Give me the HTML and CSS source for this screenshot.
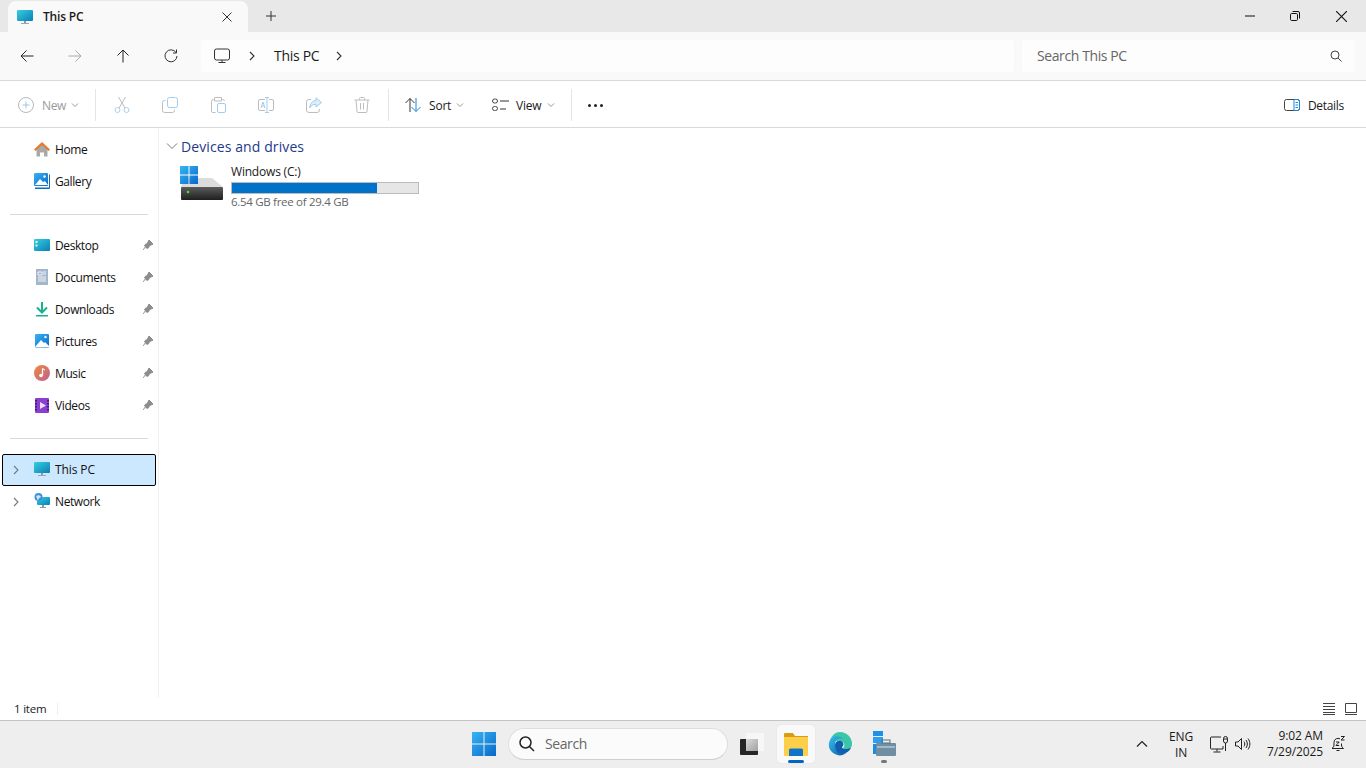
FILE: index.html
```html
<!DOCTYPE html>
<html>

<head>
    <meta charset="utf-8">
    <title>This PC</title>
    <link rel="stylesheet" href="styles.css">
</head>

<body>
    <!-- 공용 아이콘 -->
    <svg class="defs" width="0" height="0">
        <defs>
            <linearGradient id="gScreen" x1="0" y1="0" x2="1" y2="1">
                <stop offset="0" stop-color="#35cfe0"/>
                <stop offset="1" stop-color="#0a7fb5"/>
            </linearGradient>
            <linearGradient id="gBlue" x1="0" y1="0" x2="1" y2="1">
                <stop offset="0" stop-color="#36b5f5"/>
                <stop offset="1" stop-color="#0868c8"/>
            </linearGradient>
            <linearGradient id="gMusic" x1="0" y1="0" x2="1" y2="1">
                <stop offset="0" stop-color="#ee8a3c"/>
                <stop offset="1" stop-color="#c0608f"/>
            </linearGradient>
            <linearGradient id="gDrive" x1="0" y1="0" x2="0" y2="1">
                <stop offset="0" stop-color="#5c5c5c"/>
                <stop offset="1" stop-color="#1e1e1e"/>
            </linearGradient>
            <linearGradient id="gEdge" x1="0" y1="0" x2="1" y2="1">
                <stop offset="0" stop-color="#35c1f1"/>
                <stop offset="1" stop-color="#0c59a4"/>
            </linearGradient>
            <linearGradient id="gTask" x1="0" y1="0" x2="1" y2="1">
                <stop offset="0" stop-color="#dadada"/>
                <stop offset="1" stop-color="#a0a0a0"/>
            </linearGradient>
            <symbol id="monitor" viewBox="0 0 16 16">
                <rect x="0" y="1" width="16" height="11" rx="1" fill="url(#gScreen)"/>
                <rect x="7" y="12" width="2" height="2" fill="#8a9aa5"/>
                <rect x="4" y="14" width="8" height="1" fill="#9aa7b0"/>
            </symbol>
            <symbol id="pin" viewBox="0 0 12 12">
                <path d="M7 1l4 4-1 .6-2.300.8-1.200 2.400L5 9.400 2.600 7 3.200 5.500l2.400-1.200.8-2.300z M3.600 7.600L1.200 10.800" fill="#8c8c8c" stroke="#8c8c8c"/>
            </symbol>
            <symbol id="chev-right" viewBox="0 0 10 10">
                <path d="M3 1l4 4-4 4" fill="none" stroke="currentColor" stroke-width="1.100"/>
            </symbol>
            <symbol id="chev-down" viewBox="0 0 10 10">
                <path d="M2 3.500L5 6.500 8 3.500" fill="none" stroke="currentColor"/>
            </symbol>
        </defs>
    </svg>

    <div class="window">
        <!-- 타이틀바 -->
        <div class="titlebar">
            <div class="tab">
                <svg class="ico16" width="16" height="16"><use href="#monitor"/></svg>
                <span class="tab-name">This PC</span>
                <svg class="tab-close" width="10" height="10" viewBox="0 0 10 10"><path d="M.5.5l9 9M9.500.5l-9 9" stroke="#333" fill="none"/></svg>
            </div>
            <svg class="tab-add" width="10" height="10" viewBox="0 0 10 10"><path d="M5 0v10M0 5h10" stroke="#333" fill="none"/></svg>
            <div class="win-btns">
                <svg width="10" height="10" viewBox="0 0 10 10"><path d="M0 5h10" stroke="#111" fill="none"/></svg>
                <svg width="10" height="10" viewBox="0 0 10 10"><rect x=".5" y="2.500" width="7" height="7" rx="1.200" stroke="#111" fill="none"/><path d="M2.500.5h5.500a1.500 1.500 0 0 1 1.500 1.500v5.500" stroke="#111" fill="none"/></svg>
                <svg width="10" height="10" viewBox="0 0 10 10"><path d="M0 0l10 10M10 0L0 10" stroke="#111" fill="none"/></svg>
            </div>
        </div>

        <!-- 주소줄 -->
        <div class="navbar">
            <div class="nav-btns">
                <svg width="16" height="16" viewBox="0 0 16 16"><path d="M14.500 8H2M7.500 2.500L2 8l5.500 5.500" stroke="#222" fill="none"/></svg>
                <svg width="16" height="16" viewBox="0 0 16 16"><path d="M1.500 8H14M8.500 2.500L14 8l-5.500 5.500" stroke="#aaa" fill="none"/></svg>
                <svg width="16" height="16" viewBox="0 0 16 16"><path d="M8 14.500V2M2.500 7.500L8 2l5.500 5.500" stroke="#222" fill="none"/></svg>
                <svg width="16" height="16" viewBox="0 0 16 16"><path d="M13 4.500A6 6 0 1 0 14 8M13.500 1.500v3.500H10" stroke="#333" fill="none"/></svg>
            </div>
            <div class="crumbs">
                <svg width="16" height="16" viewBox="0 0 16 16"><rect x=".5" y="1" width="15" height="11" rx="2" stroke="#333" fill="none"/><path d="M8 12v2.500M4.500 14.500h7" stroke="#333" fill="none"/></svg>
                <svg class="crumb-chev" width="10" height="10"><use href="#chev-right"/></svg>
                <span class="crumb-name">This PC</span>
                <svg class="crumb-chev" width="10" height="10"><use href="#chev-right"/></svg>
            </div>
            <div class="searchbox">
                <span>Search This PC</span>
                <svg width="12" height="12" viewBox="0 0 12 12"><circle cx="5" cy="5" r="4" stroke="#444" fill="none"/><path d="M8 8l3.500 3.500" stroke="#444" fill="none"/></svg>
            </div>
        </div>

        <!-- 명령줄 -->
        <div class="toolbar">
            <div class="tool-new">
                <svg width="16" height="16" viewBox="0 0 16 16"><circle cx="8" cy="8" r="7.500" stroke="#b9b9b9" fill="none"/><path d="M8 4.500v7M4.500 8h7" stroke="#9cc8ec" fill="none"/></svg>
                <span>New</span>
                <svg class="caret" width="10" height="10"><use href="#chev-down"/></svg>
            </div>
            <i class="sep"></i>
            <div class="tool-icon">
                <svg width="16" height="16" viewBox="0 0 16 16"><circle cx="3.500" cy="13" r="2.500" stroke="#a6d0f0" fill="none"/><circle cx="12.500" cy="13" r="2.500" stroke="#a6d0f0" fill="none"/><path d="M5 11L11.500 0M11 11L4.500 0" stroke="#bdbdbd" fill="none"/></svg>
            </div>
            <div class="tool-icon">
                <svg width="16" height="16" viewBox="0 0 16 16"><rect x="5.500" y=".5" width="10" height="10" rx="2" stroke="#9fcdf0" fill="none"/><path d="M3.500 3.500H2.500a2 2 0 0 0-2 2v8a2 2 0 0 0 2 2h8a2 2 0 0 0 2-2v-1" stroke="#bdbdbd" fill="none"/></svg>
            </div>
            <div class="tool-icon">
                <svg width="16" height="16" viewBox="0 0 16 16"><path d="M4.500 2.500h-1a2 2 0 0 0-2 2v10a1.500 1.500 0 0 0 1.500 1h2.500M11.500 2.500h1a2 2 0 0 1 2 1.500M4.500 .5h7v3.500h-7z" stroke="#bdbdbd" fill="none"/><rect x="7.500" y="6.500" width="8" height="9" rx="1.500" stroke="#9fcdf0" fill="none"/></svg>
            </div>
            <div class="tool-icon">
                <svg width="16" height="16" viewBox="0 0 16 16"><path d="M7 2.500H2a1.500 1.500 0 0 0-1.500 1.500v8A1.500 1.500 0 0 0 2 13.500h5M11 2.500h3a1.500 1.500 0 0 1 1.500 1.500v8a1.500 1.500 0 0 1-1.500 1.500h-3" stroke="#bdbdbd" fill="none"/><path d="M7 .5h4M7 15.500h4M9 .5v15" stroke="#9fcdf0" fill="none"/><path d="M3 11l2-6 2 6M3.800 9h2.400" stroke="#9fcdf0" fill="none"/></svg>
            </div>
            <div class="tool-icon">
                <svg width="16" height="16" viewBox="0 0 16 16"><path d="M5 2.500H3a2.500 2.500 0 0 0-2.500 2.500v8A2.500 2.500 0 0 0 3 15.500h8a2.500 2.500 0 0 0 2.500-2.500v-1" stroke="#bdbdbd" fill="none"/><path d="M10 .8L15.500 5.500 10 10V7.300C7 7.300 5 8.300 3.800 11c0-4.500 2.500-7.300 6.200-7.500z" stroke="#9fcdf0" fill="#deeefa"/></svg>
            </div>
            <div class="tool-icon">
                <svg width="16" height="16" viewBox="0 0 16 16"><path d="M.5 3h15M5.500 3V1.500a1 1 0 0 1 1-1h3a1 1 0 0 1 1 1V3M2 3l1 11.500a1 1 0 0 0 1 1h8a1 1 0 0 0 1-1L14 3M6.500 6v6.500M9.500 6v6.500" stroke="#bdbdbd" fill="none"/></svg>
            </div>
            <i class="sep sep-b"></i>
            <div class="tool-text tool-sort">
                <svg width="16" height="16" viewBox="0 0 16 16"><path d="M5 15V1.500M.5 6L5 1.500 9.500 6" stroke="#333" fill="none"/><path d="M11 1v13.500M6.500 10l4.500 4.500 4.500-4.500" stroke="#1a86d8" fill="none"/></svg>
                <span>Sort</span>
                <svg class="caret" width="10" height="10"><use href="#chev-down"/></svg>
            </div>
            <div class="tool-text tool-view">
                <svg width="18" height="14" viewBox="0 0 18 14"><rect x=".5" y="1" width="5" height="4" rx="2" stroke="#444" fill="none"/><rect x=".5" y="8.500" width="5" height="4" rx="2" stroke="#444" fill="none"/><path d="M8 3h9M8 11h6" stroke="#333" fill="none"/></svg>
                <span>View</span>
                <svg class="caret" width="10" height="10"><use href="#chev-down"/></svg>
            </div>
            <i class="sep sep-c"></i>
            <div class="tool-more"><b></b><b></b><b></b></div>
            <div class="tool-details">
                <svg width="16" height="12" viewBox="0 0 16 12"><rect x=".5" y=".5" width="15" height="11" rx="2" stroke="#444" fill="none"/><path d="M10 .5h3.500a2 2 0 0 1 2 2v7a2 2 0 0 1-2 2H10zM11.500 3.500h2.500M11.500 6h2.500M11.500 8.500h2.500" stroke="#1a86d8" fill="none"/></svg>
                <span>Details</span>
            </div>
        </div>

        <div class="main">
            <!-- 왼쪽 탐색창 -->
            <div class="sidebar">
                <div class="side-item">
                    <svg class="ico16" width="16" height="16" viewBox="0 0 16 16"><path d="M2.500 7L8 3l5.500 4v8.500H10v-4H6v4H2.500z" fill="#a9a9a9"/><path d="M0 8.500L8 1l8 7.500-1.500 1.500L8 4 1.500 10z" fill="#e8792b"/></svg>
                    <span>Home</span>
                </div>
                <div class="side-item">
                    <svg class="ico16" width="16" height="16" viewBox="0 0 16 16"><rect x="0" y="0" width="14" height="13" rx="1" fill="url(#gBlue)"/><path d="M1 12l5-6 3 3 2-1 3 4z" fill="#fff"/><circle cx="10.500" cy="3.500" r="1.200" fill="#fff"/><path d="M15 1.500h1V15a1 1 0 0 1-1 1H1v-1.500h14z" fill="#0e6fc0"/></svg>
                    <span>Gallery</span>
                </div>
                <hr class="side-line">
                <div class="side-item">
                    <svg class="ico16" width="16" height="16" viewBox="0 0 16 16"><rect x="0" y="2" width="16" height="12" rx="1" fill="url(#gScreen)"/><rect x="1.500" y="4" width="2" height="2" fill="#dff6fb"/><rect x="1.500" y="7.500" width="2" height="2" fill="#dff6fb"/></svg>
                    <span>Desktop</span>
                    <svg class="pin" width="12" height="12"><use href="#pin"/></svg>
                </div>
                <div class="side-item">
                    <svg class="ico16" width="16" height="16" viewBox="0 0 16 16"><rect x="2" y="0" width="12" height="16" fill="#a4b6cb"/><path d="M4 3h4v3H4zM9 3h3M9 5h3M4 8h8M4 10h8M4 12h8" stroke="#f3f6fa" fill="none"/></svg>
                    <span>Documents</span>
                    <svg class="pin" width="12" height="12"><use href="#pin"/></svg>
                </div>
                <div class="side-item">
                    <svg class="ico16" width="16" height="16" viewBox="0 0 16 16"><path d="M8 1v10M3 6.500l5 5 5-5" stroke="#1bb090" stroke-width="2" fill="none"/><rect x="2" y="14" width="12" height="1.500" fill="#1bb090"/></svg>
                    <span>Downloads</span>
                    <svg class="pin" width="12" height="12"><use href="#pin"/></svg>
                </div>
                <div class="side-item">
                    <svg class="ico16" width="16" height="16" viewBox="0 0 16 16"><rect x="1" y="1" width="14" height="14" rx="1" fill="url(#gBlue)"/><path d="M1 14l6-7 3 3 1-1 4 4v1.500H1z" fill="#fff"/><circle cx="11.500" cy="4" r="1.200" fill="#fff"/></svg>
                    <span>Pictures</span>
                    <svg class="pin" width="12" height="12"><use href="#pin"/></svg>
                </div>
                <div class="side-item">
                    <svg class="ico16" width="16" height="16" viewBox="0 0 16 16"><circle cx="8" cy="8" r="8" fill="url(#gMusic)"/><path d="M8.500 3.500v7" stroke="#fff" stroke-width="1.300" fill="none"/><path d="M8.500 3.500l2.500 1.500" stroke="#fff" fill="none"/><circle cx="7" cy="10.500" r="1.800" fill="#fff"/></svg>
                    <span>Music</span>
                    <svg class="pin" width="12" height="12"><use href="#pin"/></svg>
                </div>
                <div class="side-item">
                    <svg class="ico16" width="16" height="16" viewBox="0 0 16 16"><rect x="1" y="1" width="14" height="15" rx="1" fill="#8a3fd0"/><path d="M6 5l6 3.500-6 3.500z" fill="#e9dcf8"/><path d="M2 3v11M14 3v11" stroke="#2c1150" stroke-width="1.500" stroke-dasharray="1.500 1.500" fill="none"/></svg>
                    <span>Videos</span>
                    <svg class="pin" width="12" height="12"><use href="#pin"/></svg>
                </div>
                <hr class="side-line">
                <div class="side-item side-tree is-active">
                    <svg class="tree-chev" width="10" height="10"><use href="#chev-right"/></svg>
                    <svg class="ico16" width="16" height="16"><use href="#monitor"/></svg>
                    <span>This PC</span>
                </div>
                <div class="side-item side-tree">
                    <svg class="tree-chev" width="10" height="10"><use href="#chev-right"/></svg>
                    <svg class="ico16" width="16" height="16" viewBox="0 0 16 16"><rect x="3" y="4" width="13" height="8" rx="1" fill="url(#gScreen)"/><rect x="8" y="12" width="2" height="2" fill="#8a9aa5"/><rect x="6" y="14" width="6" height="1" fill="#8a9aa5"/><circle cx="4.500" cy="4" r="4" fill="#3f90d8"/><path d="M2 3c2-1 4-1 5 1-2 1-3 2-3 4" fill="#cfe6f7"/></svg>
                    <span>Network</span>
                </div>
            </div>

            <!-- 내용 -->
            <div class="content">
                <div class="group-head">
                    <svg width="12" height="12" viewBox="0 0 12 12"><path d="M1 3.500l5 5 5-5" stroke="#777" fill="none"/></svg>
                    <span>Devices and drives</span>
                </div>
                <div class="drive">
                    <svg class="drive-ico" width="44" height="36" viewBox="0 0 44 36">
                        <path d="M5 12h27l11 9H1z" fill="#dcdcdc"/>
                        <path d="M0 0h8.500v8.500H0zM9.500 0H18v8.500H9.500zM0 9.500h8.500V18H0zM9.500 9.500H18V18H9.500z" fill="url(#gBlue)"/>
                        <rect x="1" y="21" width="42" height="13" rx="1" fill="url(#gDrive)"/>
                        <circle cx="8" cy="26" r="1.300" fill="#3fe23f"/>
                    </svg>
                    <div class="drive-info">
                        <div class="drive-name">Windows (C:)</div>
                        <div class="bar"><div class="bar-fill" style="width: 77.800%"></div></div>
                        <div class="drive-free">6.54 GB free of 29.4 GB</div>
                    </div>
                </div>
            </div>
        </div>

        <!-- 상태줄 -->
        <div class="statusbar">
            <span class="status-text">1 item</span>
            <i class="status-sep"></i>
            <div class="status-views">
                <svg width="12" height="12" viewBox="0 0 12 12"><path d="M0 .5h12M0 3.500h12M0 6.500h12M0 9.500h12M0 11.500h12" stroke="#444" fill="none"/></svg>
                <svg width="12" height="12" viewBox="0 0 12 12"><path d="M.5 9.500v-9h11v9zM0 11.500h12" stroke="#444" fill="none"/></svg>
            </div>
        </div>
    </div>

    <!-- 작업표시줄 -->
    <div class="taskbar">
        <svg class="start" width="24" height="24" viewBox="0 0 24 24"><path d="M0 0h11.500v11.500H0zM12.500 0H24v11.500H12.500zM0 12.500h11.500V24H0zM12.500 12.500H24V24H12.500z" fill="url(#gBlue)"/></svg>
        <div class="task-search">
            <svg width="16" height="16" viewBox="0 0 16 16"><circle cx="6.500" cy="6.500" r="5.500" stroke="#222" stroke-width="1.500" fill="none"/><path d="M10.500 10.500L15 15" stroke="#222" stroke-width="1.500" fill="none"/></svg>
            <span>Search</span>
        </div>
        <div class="task-app">
            <svg width="24" height="22" viewBox="0 0 24 22"><rect x="6" y="0" width="18" height="18" rx="1" fill="#f7f7f7"/><rect x="0" y="6" width="18" height="16" rx="1" fill="#262626"/><rect x="6" y="6" width="12" height="12" fill="url(#gTask)"/></svg>
        </div>
        <div class="task-app is-open">
            <svg width="24" height="24" viewBox="0 0 24 24"><path d="M0 2a1 1 0 0 1 1-1h8l2 3h13v3H0z" fill="#d79e13"/><path d="M0 5h24v18a1 1 0 0 1-1 1H1a1 1 0 0 1-1-1z" fill="#fbcf4a"/><path d="M5 18a1.500 1.500 0 0 1 1.500-1.500h11A1.500 1.500 0 0 1 19 18v6H5z" fill="#0f74c8"/></svg>
            <b class="running"></b>
        </div>
        <div class="task-app">
            <svg width="24" height="24" viewBox="0 0 24 24"><path d="M12 0a12 12 0 0 1 12 12c0 4-3 5.500-6 5.500-2 0-3-1-3-1.500 2-1 2-5-1-6.500S5 9 2 13C1 6 6 0 12 0z" fill="#3ac6a8"/><path d="M1 11C2 4 10 2 15 7c-5-2-8 1-8 6 0 5 5 9 11 8-3 3-8 3-11 1C3 20 0 16 1 11z" fill="url(#gEdge)"/><path d="M7 13c0-3 3-5 6-4 2 .7 3 3 2 5-2 1-1 3 3 3 2 0 4-.5 5-2-1 5-7 8-12 6-3-1-4-5-4-8z" fill="#0e5fb0"/></svg>
        </div>
        <div class="task-app">
            <svg width="24" height="26" viewBox="0 0 24 26"><rect x="1" y="0" width="10" height="5" fill="#1e90e8"/><rect x="1" y="6" width="10" height="6" fill="#2a9ff0"/><rect x="1" y="13" width="10" height="10" fill="#1e8ae0"/><rect x="4" y="12" width="20" height="13" rx="1" fill="#6f8ea3"/><rect x="10" y="9" width="8" height="3" fill="none" stroke="#56707f"/><path d="M5 16h18" stroke="#dbe5ea"/></svg>
            <b class="running-dim"></b>
        </div>
        <div class="tray">
            <svg class="tray-up" width="12" height="8" viewBox="0 0 12 8"><path d="M1 6.500l5-5 5 5" stroke="#222" stroke-width="1.200" fill="none"/></svg>
            <div class="lang">ENG<br>IN</div>
            <svg class="tray-net" width="18" height="18" viewBox="0 0 18 18"><path d="M11 2H1.500a1 1 0 0 0-1 1v10a1 1 0 0 0 1 1H13v-3M7 14v2.500M3.500 17h7" stroke="#222" fill="none"/><rect x="13.500" y="1.500" width="4" height="6.500" rx="2" stroke="#222" fill="none"/><path d="M15.500 8v8M13.500 4h4" stroke="#222" fill="none"/></svg>
            <svg class="tray-vol" width="16" height="14" viewBox="0 0 16 14"><path d="M.5 5h2.500L6.500 1.500v11L3 9H.5z" stroke="#222" fill="none"/><path d="M9 4.500c1 1.500 1 3.500 0 5M11 3c1.800 2.500 1.800 5.500 0 8M13 1.500c2.500 3.500 2.500 7.500 0 11" stroke="#222" fill="none"/></svg>
            <div class="clock">9:02 AM<br>7/29/2025</div>
            <svg class="tray-bell" width="14" height="16" viewBox="0 0 14 16"><path d="M9 2.800C8.400 2.500 7.700 2.400 7 2.400 4.500 2.400 3 4.200 3 6.500V9c0 1.500-.8 2.500-2 3.500h11.500c-1.200-1-2-2-2-3.500V7.500M5.500 14.500h3" stroke="#222" fill="none"/><path d="M10 .5h3.500L10 4h3.500M5 6h3.200L5 9.500h3.200" stroke="#222" fill="none"/></svg>
        </div>
    </div>
</body>

</html>
```

FILE: styles.css
```css
* {
    box-sizing: border-box;
}
html, body {
    height: 100%;
}
body {
    margin: 0;
    overflow: hidden;
    display: flex;
    flex-direction: column;
    font-family: "Open Sans", "Noto Sans", sans-serif;
    font-size: 12px;
    letter-spacing: -0.2px;
    color: #1a1a1a;
    background: #fff;
}
svg {
    display: block;
    flex: none;
}
.defs {
    position: absolute;
}
.window {
    flex: 1;
    min-height: 0;
    display: flex;
    flex-direction: column;
}

/* 타이틀바 */
.titlebar {
    height: 32px;
    flex: none;
    display: flex;
    align-items: flex-end;
    padding-left: 8px;
    background: #e8e8e8;
}
.tab {
    width: 240px;
    height: 31px;
    display: flex;
    align-items: center;
    padding: 0 16px 0 9px;
    background: #f9f9f9;
    border-radius: 8px 8px 0 0;
}
.tab-name {
    flex: 1;
    margin-left: 10px;
    font-weight: 600;
}
.tab-add {
    margin: 0 0 11px 18px;
}
.win-btns {
    margin-left: auto;
    align-self: center;
    display: flex;
    gap: 35px;
    padding-right: 19px;
}
.win-btns svg:nth-child(2) {
    margin-right: 1px;
}
.win-btns svg:nth-child(3) {
    width: 11px;
    height: 11px;
}

/* 주소줄 */
.navbar {
    height: 49px;
    flex: none;
    display: flex;
    align-items: center;
    padding: 0 11px 1px 19px;
    background: #f9f9f9;
    border-bottom: 1px solid #d9d9d9;
}
.nav-btns {
    display: flex;
    gap: 32px;
    width: 182px;
}
.crumbs {
    flex: 1;
    height: 32px;
    display: flex;
    align-items: center;
    padding-left: 13px;
    background: #fdfdfd;
    border-radius: 4px;
    font-size: 14px;
    letter-spacing: -0.3px;
}
.crumb-chev {
    color: #333;
    margin: 0 15px 0 15px;
}
.crumb-chev:last-child {
    margin-left: 15px;
}
.crumbs .crumb-chev:nth-child(2) {
    margin: 0 17px 0 17px;
}
.searchbox {
    width: 333px;
    height: 32px;
    margin-left: 8px;
    display: flex;
    align-items: center;
    justify-content: space-between;
    padding: 0 13px 0 15px;
    background: #fdfdfd;
    border-radius: 4px;
    font-size: 14px;
    letter-spacing: -0.4px;
    color: #666;
}

/* 명령줄 */
.toolbar {
    height: 47px;
    flex: none;
    display: flex;
    align-items: center;
    padding: 2px 0 0 18px;
    border-bottom: 1px solid #d9d9d9;
    background: #fff;
}
.tool-new {
    width: 77px;
    display: flex;
    align-items: center;
    color: #9a9a9a;
}
.tool-new span {
    margin: 0 4px 0 8px;
    letter-spacing: -0.4px;
}
.caret {
    color: #999;
}
.sep {
    width: 1px;
    height: 32px;
    background: #e5e5e5;
    margin-right: 2px;
}
.sep-b {
    margin: 0 0 0 2px;
}
.sep-c {
    margin: 0;
}
.tool-icon {
    width: 48px;
    display: flex;
    justify-content: center;
}
.tool-text {
    display: flex;
    align-items: center;
}
.tool-sort {
    margin-left: 16px;
    width: 87px;
}
.tool-sort span {
    margin: 0 4px 0 8px;
}
.tool-view {
    width: 79px;
}
.tool-view span {
    margin: 0 5px 0 6px;
}
.tool-more {
    margin-left: 16px;
    display: flex;
    gap: 3px;
}
.tool-more b {
    width: 3px;
    height: 3px;
    border-radius: 50%;
    background: #222;
}
.tool-details {
    margin-left: auto;
    padding-right: 22px;
    display: flex;
    align-items: center;
    gap: 8px;
    letter-spacing: -0.3px;
}

/* 본문 */
.main {
    flex: 1;
    min-height: 0;
    display: flex;
}
.sidebar {
    width: 159px;
    flex: none;
    padding: 6px 2px 0;
    border-right: 1px solid #f0f0f0;
    letter-spacing: -0.4px;
}
.side-item {
    height: 32px;
    display: flex;
    align-items: center;
    padding: 0 1px 2px 31px;
    border: 1px solid transparent;
    color: #111;
}
.side-item .ico16 {
    margin-right: 5px;
}
.side-item span {
    flex: 1;
}
.side-tree {
    padding-left: 8px;
}
.tree-chev {
    color: #777;
    margin: 2px 13px 0 0;
}
.is-active {
    background: #cce8ff;
    border-color: #000;
    border-radius: 2px;
    letter-spacing: -0.1px;
}
.side-line {
    height: 1px;
    margin: 16px 8px 15px;
    border: 0;
    background: #d9d9d9;
}
.content {
    flex: 1;
    padding: 8px 0 0 7px;
}
.group-head {
    display: flex;
    align-items: center;
    gap: 3px;
    font-size: 14px;
    letter-spacing: 0.1px;
    color: #1e3a8a;
    height: 20px;
}
.drive {
    display: flex;
    margin: 8px 0 0 14px;
}
.drive-ico {
    margin-top: 2px;
}
.drive-info {
    margin-left: 7px;
}
.drive-name {
    line-height: 16px;
}
.bar {
    width: 188px;
    height: 12px;
    margin-top: 2px;
    background: #e6e6e6;
    border: 1px solid #bcbcbc;
}
.bar-fill {
    height: 100%;
    background: #0072c9;
}
.drive-free {
    line-height: 16px;
    font-size: 11.500px;
    letter-spacing: -0.3px;
    color: #666;
}

/* 상태줄 */
.statusbar {
    height: 23px;
    flex: none;
    display: flex;
    align-items: center;
    padding: 0 9px 0 14px;
}
.status-text {
    font-size: 11.500px;
}
.status-sep {
    width: 1px;
    height: 12px;
    margin-left: 11px;
    background: #efefef;
}
.status-views {
    margin-left: auto;
    display: flex;
    gap: 10px;
}

/* 작업표시줄 */
.taskbar {
    height: 48px;
    flex: none;
    display: flex;
    align-items: center;
    padding: 0 0 1px 472px;
    background: #eeeeee;
    border-top: 1px solid #c4c4c4;
}
.task-search {
    width: 220px;
    height: 32px;
    margin-left: 12px;
    display: flex;
    align-items: center;
    gap: 10px;
    padding-left: 10px;
    background: #fbfbfb;
    border: 1px solid #dedede;
    border-bottom-color: #cfcfcf;
    border-radius: 16px;
    font-size: 14px;
    letter-spacing: -0.4px;
    color: #666;
}
.task-search span {
    padding-bottom: 2px;
}
.task-app {
    position: relative;
    width: 38px;
    height: 38px;
    margin-left: 6px;
    display: flex;
    align-items: center;
    justify-content: center;
    border-radius: 4px;
}
.task-search + .task-app {
    margin-left: 5px;
}
.task-app.is-open {
    background: #f9f9f9;
    box-shadow: 0 0 1px #ccc;
}
.running {
    position: absolute;
    left: 11px;
    bottom: 0;
    width: 16px;
    height: 3px;
    border-radius: 2px;
    background: #0067c0;
}
.running-dim {
    position: absolute;
    left: 16px;
    bottom: 0;
    width: 6px;
    height: 3px;
    border-radius: 2px;
    background: #777;
}
.tray {
    margin-left: auto;
    display: flex;
    align-items: center;
    padding-right: 21px;
}
.lang {
    width: 40px;
    margin-left: 13px;
    padding-top: 2px;
    text-align: center;
    line-height: 16px;
}
.tray-net {
    margin-left: 9px;
}
.tray-vol {
    margin-left: 7px;
}
.clock {
    margin-left: 8px;
    width: 64px;
    text-align: right;
    line-height: 16px;
    letter-spacing: -0.1px;
}
.tray-bell {
    margin-left: 8px;
}
```
